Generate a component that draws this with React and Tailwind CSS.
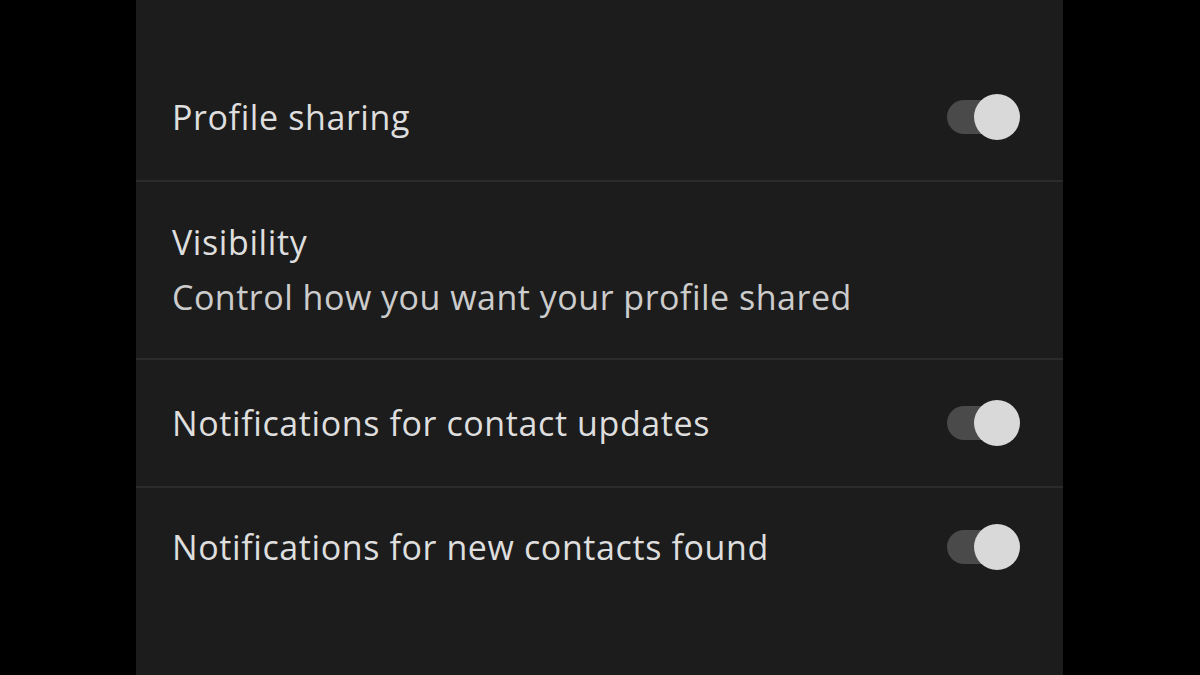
const rowText = 'text-[34px] tracking-[0.6px] text-[#dedede]';

const Toggle = () => (
  <div className="relative w-[74px] h-[48px] flex items-center">
    <div className="ml-[1px] w-[60px] h-[34px] rounded-full bg-[#4a4a4a]" />
    <div className="absolute right-0 w-[46px] h-[46px] rounded-full bg-[#d9d9d9]" />
  </div>
);

const Divider = () => <div className="h-[2px] bg-[#2b2b2b]" />;

const ToggleRow = ({ label, height }) => (
  <div className={`flex items-center justify-between pl-[36px] pr-[43px] ${height}`}>
    <span className={`${rowText} leading-none`}>{label}</span>
    <Toggle />
  </div>
);

export default function App() {
  return (
    <div className="w-[1200px] h-[675px] bg-black flex overflow-hidden" style={{ fontFamily: '"Open Sans", Roboto, sans-serif' }}>
      <div className="w-[927px] ml-[136px] bg-[#1c1c1c] flex flex-col">
        <div className="h-[54px]" />
        <ToggleRow label="Profile sharing" height="h-[126px]" />
        <Divider />
        <div className="h-[176px] flex flex-col justify-center pl-[36px]">
          <span className={`${rowText} leading-[55px]`}>Visibility</span>
          <span className="text-[34px] tracking-[0.5px] leading-[55px] text-[#cccccc]">Control how you want your profile shared</span>
        </div>
        <Divider />
        <ToggleRow label="Notifications for contact updates" height="h-[126px]" />
        <Divider />
        <ToggleRow label="Notifications for new contacts found" height="h-[118px]" />
      </div>
    </div>
  );
}
